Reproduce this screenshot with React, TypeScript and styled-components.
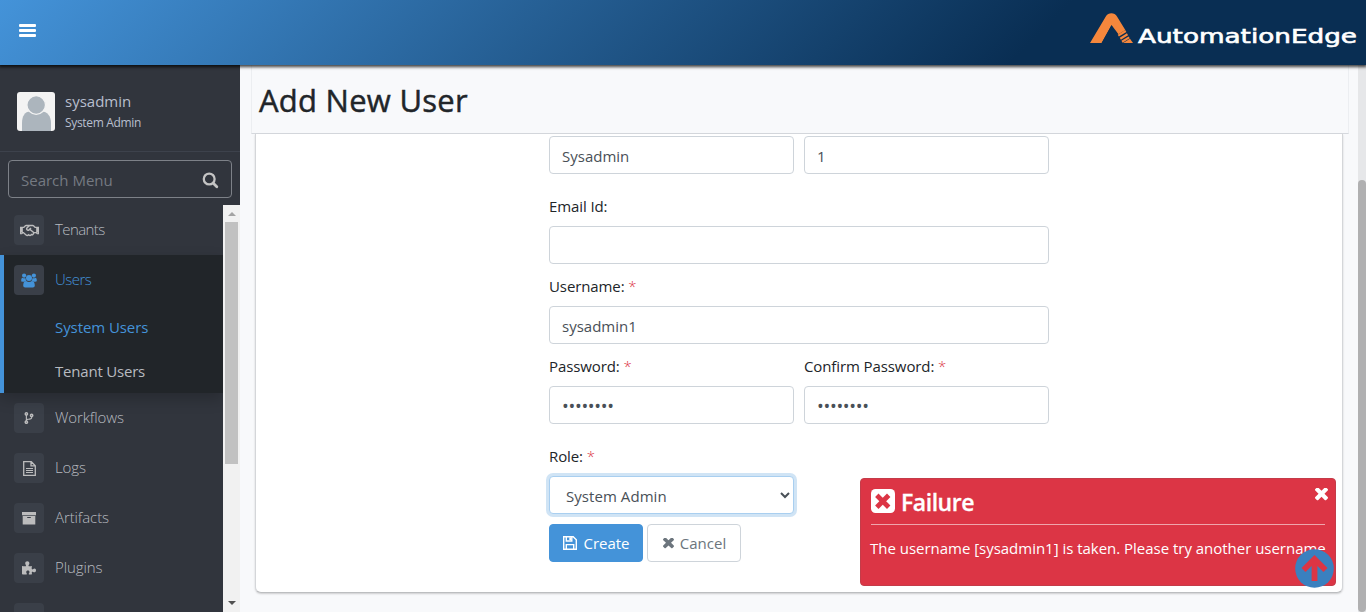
import React from 'react';
import styled, { createGlobalStyle, css } from 'styled-components';
import { FaRegHandshake, FaCodeBranch } from 'react-icons/fa';

const Global = createGlobalStyle`
  *, *::before, *::after { box-sizing: border-box; }
  body {
    margin: 0;
    overflow: hidden;
    font-family: "Open Sans", "Noto Sans", sans-serif;
    font-size: 15px;
    line-height: 24px;
    color: #212529;
    background: #f8f9fb;
  }
`;

const Page = styled.div`
  display: flex;
  flex-direction: column;
  height: 612px;
  overflow: hidden;
`;

const TopBar = styled.header`
  position: relative;
  z-index: 3;
  flex: 0 0 65px;
  display: flex;
  align-items: flex-start;
  justify-content: space-between;
  padding: 0 8px 0 19px;
  background: linear-gradient(135deg, #4493d9 0%, #092e53 75%, #092e53 100%);
  box-shadow: 0 1px 3px 1px rgba(0, 0, 0, 0.75);
`;

const MenuButton = styled.button`
  margin: 24px 0 0;
  padding: 0;
  border: 0;
  width: 17px;
  height: 13px;
  display: flex;
  flex-direction: column;
  justify-content: space-between;
  background: transparent;
`;

const MenuBar = styled.span`
  height: 3px;
  border-radius: 1px;
  background: #fff;
`;

const Body = styled.div`
  flex: 1;
  display: flex;
  min-height: 0;
`;

const Sidebar = styled.aside`
  flex: 0 0 240px;
  display: flex;
  flex-direction: column;
  background: #31353d;
`;

const Profile = styled.div`
  flex: 0 0 87px;
  display: flex;
  gap: 10px;
  padding: 27px 17px 0;
  border-bottom: 1px solid #3d424c;
`;

const ProfileText = styled.div`
  display: flex;
  flex-direction: column;
  color: #b8bfce;
`;

const ProfileName = styled.span`
  margin-top: -1px;
  font-size: 15px;
  line-height: 20px;
`;

const ProfileRole = styled.span`
  font-size: 12px;
  line-height: 24px;
  letter-spacing: -0.33px;
`;

const Search = styled.div`
  flex: 0 0 38px;
  margin: 8px 8px 7px;
  padding: 2px 12px 0 12px;
  display: flex;
  align-items: center;
  justify-content: space-between;
  border: 1px solid #7d8188;
  border-radius: 4px;
  color: #757a82;
`;

const MenuArea = styled.div`
  flex: 1;
  display: flex;
  min-height: 0;
`;

const Menu = styled.nav`
  flex: 1;
  overflow: hidden;
`;

const Group = styled.div<{ $active?: boolean }>`
  ${(p) =>
    p.$active &&
    css`
      position: relative;
      background: #212529;
      box-shadow: inset 4px 0 0 #4493d9, 0 6px 14px rgba(0, 0, 0, 0.2);
    `}
`;

const MenuRow = styled.a<{ $active?: boolean }>`
  height: 50px;
  padding-left: 14px;
  display: flex;
  align-items: center;
  gap: 11px;
  font-weight: 300;
  color: ${(p) => (p.$active ? '#4493d9' : '#b8bbc0')};
`;

const MenuLabel = styled.span<{ $tracking?: number }>`
  padding-bottom: 2px;
  letter-spacing: ${(p) => p.$tracking ?? -0.1}px;
`;

const IconTile = styled.span<{ $active?: boolean }>`
  width: 30px;
  height: 30px;
  display: flex;
  align-items: center;
  justify-content: center;
  border-radius: 4px;
  background: #3a3f48;
  color: ${(p) => (p.$active ? '#4493d9' : '#bcbcbd')};
`;

const SubRow = styled.a<{ $active?: boolean }>`
  height: 44px;
  padding-left: 55px;
  display: flex;
  align-items: center;
  letter-spacing: ${(p) => (p.$active ? '-0.08px' : '-0.2px')};
  color: ${(p) => (p.$active ? '#4493d9' : '#b8bbc0')};
`;

const ScrollTrack = styled.div`
  flex: 0 0 17px;
  display: flex;
  flex-direction: column;
  align-items: center;
  background: #f1f1f1;
`;

const ScrollArrow = styled.div`
  flex: 0 0 17px;
  display: flex;
  align-items: center;
`;

const ScrollRun = styled.div`
  flex: 1;
`;

const ScrollThumb = styled.div`
  width: 13px;
  height: 242px;
  background: #c1c1c1;
`;

const Main = styled.main`
  flex: 1;
  display: flex;
  flex-direction: column;
  padding: 0 9px 0 11px;
  min-width: 0;
`;

const TitleBar = styled.div`
  flex: 0 0 69px;
  padding: 16px 0 0 7px;
  border: 1px solid #eceef1;
  border-top: 0;
  border-bottom-color: #d5d8dd;
`;

const Title = styled.h1`
  margin: 0;
  font-size: 31px;
  line-height: 38px;
  font-weight: 500;
  letter-spacing: 0.25px;
  -webkit-text-stroke: 0.45px #212529;
`;

const Card = styled.section`
  flex: 0 0 459px;
  margin: 0 6px 0 4px;
  padding: 2px 0 0 294px;
  background: #fff;
  border: 1px solid #d4d6d9;
  border-top: 0;
  border-bottom-color: #bcbec0;
  border-radius: 0 0 6px 6px;
  box-shadow: 0 1px 2px rgba(0, 0, 0, 0.18);
`;

const Form = styled.form`
  width: 500px;
  margin-left: -1px;
  display: flex;
  flex-direction: column;
`;

const Row = styled.div`
  display: grid;
  grid-template-columns: 1fr 1fr;
  column-gap: 10px;
`;

const Field = styled.div<{ $top?: number }>`
  display: flex;
  flex-direction: column;
  margin-top: ${(p) => p.$top ?? 0}px;
`;

const Label = styled.label`
  margin-bottom: 8px;
  line-height: 24px;
  letter-spacing: -0.1px;
`;

const Star = styled.span`
  font-weight: 300;
  color: #dc3545;
`;

const control = css`
  width: 100%;
  height: 38px;
  padding: 7px 12px 5px;
  border: 1px solid #ced4da;
  border-radius: 4px;
  background: #fff;
  color: #495057;
  font: inherit;
  outline: none;
`;

const Input = styled.input`
  ${control}
  &[type='password'] {
    padding-top: 6px;
    font-size: 18px;
    letter-spacing: -0.3px;
  }
`;

const Select = styled.select`
  ${control}
  width: 245px;
  padding: 6px 0 5px 12px;
  border-color: #a9cff0;
  letter-spacing: 0.06px;
  box-shadow: 0 0 0 3px rgba(68, 147, 217, 0.25);
`;

const Buttons = styled.div`
  display: flex;
  gap: 4px;
  margin-top: 10px;
`;

const Button = styled.button<{ $primary?: boolean }>`
  width: 94px;
  height: 38px;
  padding: 0 0 0 1px;
  display: flex;
  align-items: center;
  justify-content: center;
  gap: 6px;
  border: 1px solid ${(p) => (p.$primary ? '#4493d9' : '#ced4da')};
  border-radius: 4px;
  background: ${(p) => (p.$primary ? '#4493d9' : '#fff')};
  color: ${(p) => (p.$primary ? '#fff' : '#6c757d')};
  font: inherit;
`;

const PageTrack = styled.div`
  flex: 0 0 8px;
  padding-top: 115px;
  background: #e6e7e9;
`;

const PageThumb = styled.div`
  height: 432px;
  border-radius: 4px;
  background: #b0b0b1;
`;

const Toast = styled.div`
  position: absolute;
  z-index: 4;
  left: 860px;
  top: 478px;
  width: 476px;
  height: 108px;
  padding: 10px 10px;
  border: 1px solid #c43c49;
  border-radius: 4px;
  background: #dc3545;
  color: #fff;
`;

const ToastHead = styled.div`
  height: 36px;
  display: flex;
  gap: 6px;
  border-bottom: 1px solid #efa5ac;
`;

const ToastTitle = styled.strong`
  flex: 1;
  margin-top: -1px;
  font-size: 23px;
  line-height: 28px;
  font-weight: 600;
  letter-spacing: -0.45px;
  -webkit-text-stroke: 0.3px #fff;
`;

const ToastText = styled.p`
  margin: 11px 0 0 -1px;
  white-space: nowrap;
  font-size: 15px;
  letter-spacing: -0.02px;
`;

const ToTop = styled.a`
  position: absolute;
  z-index: 5;
  left: 1295px;
  top: 549px;
  width: 39px;
  height: 39px;
`;

const CloseSlot = styled.span`
  margin: -1px -3px 0 0;
`;

const CrossDrawing = styled.svg`
  display: block;
`;

const CROSS =
  'M1724 1324q0 40-28 68l-136 136q-28 28-68 28t-68-28l-294-294-294 294q-28 28-68 28t-68-28l-136-136q-28-28-28-68t28-68l294-294-294-294q-28-28-28-68t28-68l136-136q28-28 68-28t68 28l294 294 294-294q28-28 68-28t68 28l136 136q28 28 28 68t-28 68l-294 294 294 294q28 28 28 68z';

const Cross = ({ size }: { size: number }) => (
  <CrossDrawing width={size} height={size} viewBox="536 436 1188 1188" fill="currentColor">
    <path d={CROSS} />
  </CrossDrawing>
);

const UsersIcon = () => (
  <svg width="16" height="15" viewBox="0 0 16 15" fill="currentColor">
    <circle cx="3.1" cy="2.6" r="2.1" />
    <circle cx="12.9" cy="2.6" r="2.1" />
    <circle cx="8" cy="4.9" r="3" />
    <path d="M.2 7.5C.2 5.8.7 4.7 1.6 4.7c.5.5 1.8.8 2.9.3 0 1.3.4 2 1 2.700-.9.1-1.500.4-2.100 1H1.600C.800 8.700.200 8.300.200 7.500z" />
    <path d="M15.800 7.500c0-1.700-.5-2.800-1.400-2.800-.5.5-1.800.8-2.900.3 0 1.300-.4 2-1 2.700.9.1 1.500.4 2.100 1h1.800c.8 0 1.400-.4 1.400-1.200z" />
    <path d="M2.200 12.400c0-2.500.9-4.400 3-4.400 1.600 1.200 4 1.200 5.600 0 2.100 0 3 1.900 3 4.400 0 1.200-.8 2-2 2H4.200c-1.200 0-2-.8-2-2z" />
  </svg>
);

const LogIcon = () => (
  <svg width="13" height="15" viewBox="0 0 13 15" fill="none" stroke="currentColor">
    <path d="M.7.7h7.600l4 4v9.600H.7zM8 .9v4h4.200" strokeWidth="1.3" />
    <path d="M3 7.500h7M3 9.500h7M3 11.500h7" />
  </svg>
);

const ArchiveIcon = () => (
  <svg width="14" height="13" viewBox="0 0 14 13" fill="currentColor">
    <path d="M0 0h14v3.300H0z" />
    <path fillRule="evenodd" d="M.7 4h12.600v8.500H.7zM5.200 5v1h3.600V5z" />
  </svg>
);

const PluginIcon = () => (
  <svg width="14" height="14" viewBox="0 0 14 14" fill="currentColor">
    <path d="M0 5.100c1.300.2 3.300.4 3.800.1.800-.5-.6-1.400-.6-2.900C3.200 1 4.100.2 5.300.2s2.100.8 2.100 2c0 1.400-1.200 2-.9 2.800.3.500 2 .3 3.400 0-.2 1.500-.4 2.900.1 3.300.8.500 1.300-.7 2.400-.7 1 0 1.600.7 1.600 1.800s-.7 1.900-1.800 1.900c-1 0-1.500-.9-2.100-.5-.5.3-.3 1.500 0 2.400-1.300.2-3 .5-3.300 0-.4-.7.7-1 .7-2.200 0-.8-.6-1.500-1.600-1.500s-1.700.7-1.700 1.600c0 1.100 1 1.400.6 2.100-.5.600-3.300.4-4.800.1z" />
  </svg>
);

const SaveIcon = () => (
  <svg width="14" height="14" viewBox="0 0 14 14" fill="none" stroke="currentColor" strokeWidth="1.400">
    <path d="M.7.7h9.500l3.100 3.100v9.500H.7z" />
    <path d="M3.300 13V8.600h7.400V13M3.300 1v4h5.500V1" />
    <path d="M7.200 1.300v2.900" strokeWidth="1.800" />
  </svg>
);

const SearchIcon = () => (
  <svg width="17" height="17" viewBox="0 0 17 17" fill="none" stroke="#c4c4c4" strokeLinecap="round">
    <circle cx="7.200" cy="7" r="5.400" strokeWidth="2.300" />
    <path d="M11.300 11.300l3.500 3.400" strokeWidth="2.800" />
  </svg>
);

const Avatar = () => (
  <svg width="38" height="39" viewBox="0 0 38 39">
    <rect width="38" height="39" rx="3" fill="#f3f3f3" />
    <path d="M5 39V31c0-7 3-11.500 8-11.500h12c5 0 9 4.500 9 11.500v8z" fill="#acb5bd" />
    <circle cx="19.200" cy="13" r="9.300" fill="#acb5bd" stroke="#f3f3f3" strokeWidth="1.300" />
  </svg>
);

const Logo = () => (
  <svg width="268" height="64" viewBox="0 0 268 64">
    <path
      fill="#f5873c"
      d="M0 43L15.800 16.500c2.400-4.400 8.800-4.400 11.200 0l8.300 13.500-6.800 4.200-7-9.200L11.600 43z"
    />
    <path fill="#092e53" d="M21.500 25.500L32 43H11.600z" />
    <path stroke="#f5873c" strokeWidth="2.200" d="M28.300 35.600l7.500-4.600M30.300 38.700l7.200-4.400M32 41.800l7.200-4.400" />
    <path fill="#f5873c" d="M33 43l7-4.200 3 4.200z" />
    <text
      x="48"
      y="43"
      fill="#fff"
      stroke="#fff"
      strokeWidth="0.600"
      fontFamily="'DejaVu Sans', sans-serif"
      fontSize="19"
      textLength="219"
      lengthAdjust="spacingAndGlyphs"
    >
      AutomationEdge
    </text>
  </svg>
);

const items = [
  { label: 'Workflows', icon: <FaCodeBranch size={12} /> },
  { label: 'Logs', icon: <LogIcon /> },
  { label: 'Artifacts', icon: <ArchiveIcon /> },
  { label: 'Plugins', icon: <PluginIcon /> },
  { label: '', icon: null },
];

export default function App() {
  return (
    <>
      <Global />
      <Page>
        <TopBar>
          <MenuButton aria-label="Menu">
            <MenuBar />
            <MenuBar />
            <MenuBar />
          </MenuButton>
          <Logo />
        </TopBar>
        <Body>
          <Sidebar>
            <Profile>
              <Avatar />
              <ProfileText>
                <ProfileName>sysadmin</ProfileName>
                <ProfileRole>System Admin</ProfileRole>
              </ProfileText>
            </Profile>
            <Search>
              <span>Search Menu</span>
              <SearchIcon />
            </Search>
            <MenuArea>
              <Menu>
                <MenuRow>
                  <IconTile><FaRegHandshake size={19} /></IconTile>
                  <MenuLabel $tracking={-0.6}>Tenants</MenuLabel>
                </MenuRow>
                <Group $active>
                  <MenuRow $active>
                    <IconTile $active><UsersIcon /></IconTile>
                    <MenuLabel $tracking={-0.5}>Users</MenuLabel>
                  </MenuRow>
                  <SubRow $active>System Users</SubRow>
                  <SubRow>Tenant Users</SubRow>
                </Group>
                {items.map((it, i) => (
                  <MenuRow key={i}>
                    <IconTile>{it.icon}</IconTile>
                    <MenuLabel>{it.label}</MenuLabel>
                  </MenuRow>
                ))}
              </Menu>
              <ScrollTrack>
                <ScrollArrow>
                  <svg width="8" height="4" viewBox="0 0 8 4"><path d="M0 4l4-4 4 4z" fill="#a3a3a3" /></svg>
                </ScrollArrow>
                <ScrollRun><ScrollThumb /></ScrollRun>
                <ScrollArrow>
                  <svg width="8" height="6" viewBox="0 0 8 6"><path d="M0 0l4 4 4-4z" fill="#505050" /></svg>
                </ScrollArrow>
              </ScrollTrack>
            </MenuArea>
          </Sidebar>
          <Main>
            <TitleBar><Title>Add New User</Title></TitleBar>
            <Card>
              <Form>
                <Row>
                  <Input defaultValue="Sysadmin" />
                  <Input defaultValue="1" />
                </Row>
                <Field $top={20}>
                  <Label>Email Id:</Label>
                  <Input />
                </Field>
                <Field $top={10}>
                  <Label>Username: <Star>*</Star></Label>
                  <Input defaultValue="sysadmin1" />
                </Field>
                <Row>
                  <Field $top={10}>
                    <Label>Password: <Star>*</Star></Label>
                    <Input type="password" defaultValue="password" />
                  </Field>
                  <Field $top={10}>
                    <Label>Confirm Password: <Star>*</Star></Label>
                    <Input type="password" defaultValue="password" />
                  </Field>
                </Row>
                <Field $top={20}>
                  <Label>Role: <Star>*</Star></Label>
                  <Select><option>System Admin</option></Select>
                </Field>
                <Buttons>
                  <Button type="button" $primary><SaveIcon />Create</Button>
                  <Button type="button"><Cross size={11} />Cancel</Button>
                </Buttons>
              </Form>
            </Card>
          </Main>
          <PageTrack><PageThumb /></PageTrack>
        </Body>
      </Page>
      <Toast>
        <ToastHead>
          <svg width="24" height="24" viewBox="0 0 24 24">
            <rect width="24" height="24" rx="4.500" fill="#fff" />
            <path d="M7.500 8l8.500 8.500M16 8L7.500 16.500" stroke="#dc3545" strokeWidth="4.800" strokeLinecap="square" />
          </svg>
          <ToastTitle>Failure</ToastTitle>
          <CloseSlot><Cross size={13} /></CloseSlot>
        </ToastHead>
        <ToastText>The username [sysadmin1] is taken. Please try another username</ToastText>
      </Toast>
      <ToTop>
        <svg width="39" height="39" viewBox="0 0 39 39">
          <circle cx="19.500" cy="19.500" r="19.300" fill="#3a80bf" />
          <path d="M19.500 32V11M8.500 21L19.500 10 30.500 21" fill="none" stroke="#dc3545" strokeWidth="5.800" />
        </svg>
      </ToTop>
    </>
  );
}
